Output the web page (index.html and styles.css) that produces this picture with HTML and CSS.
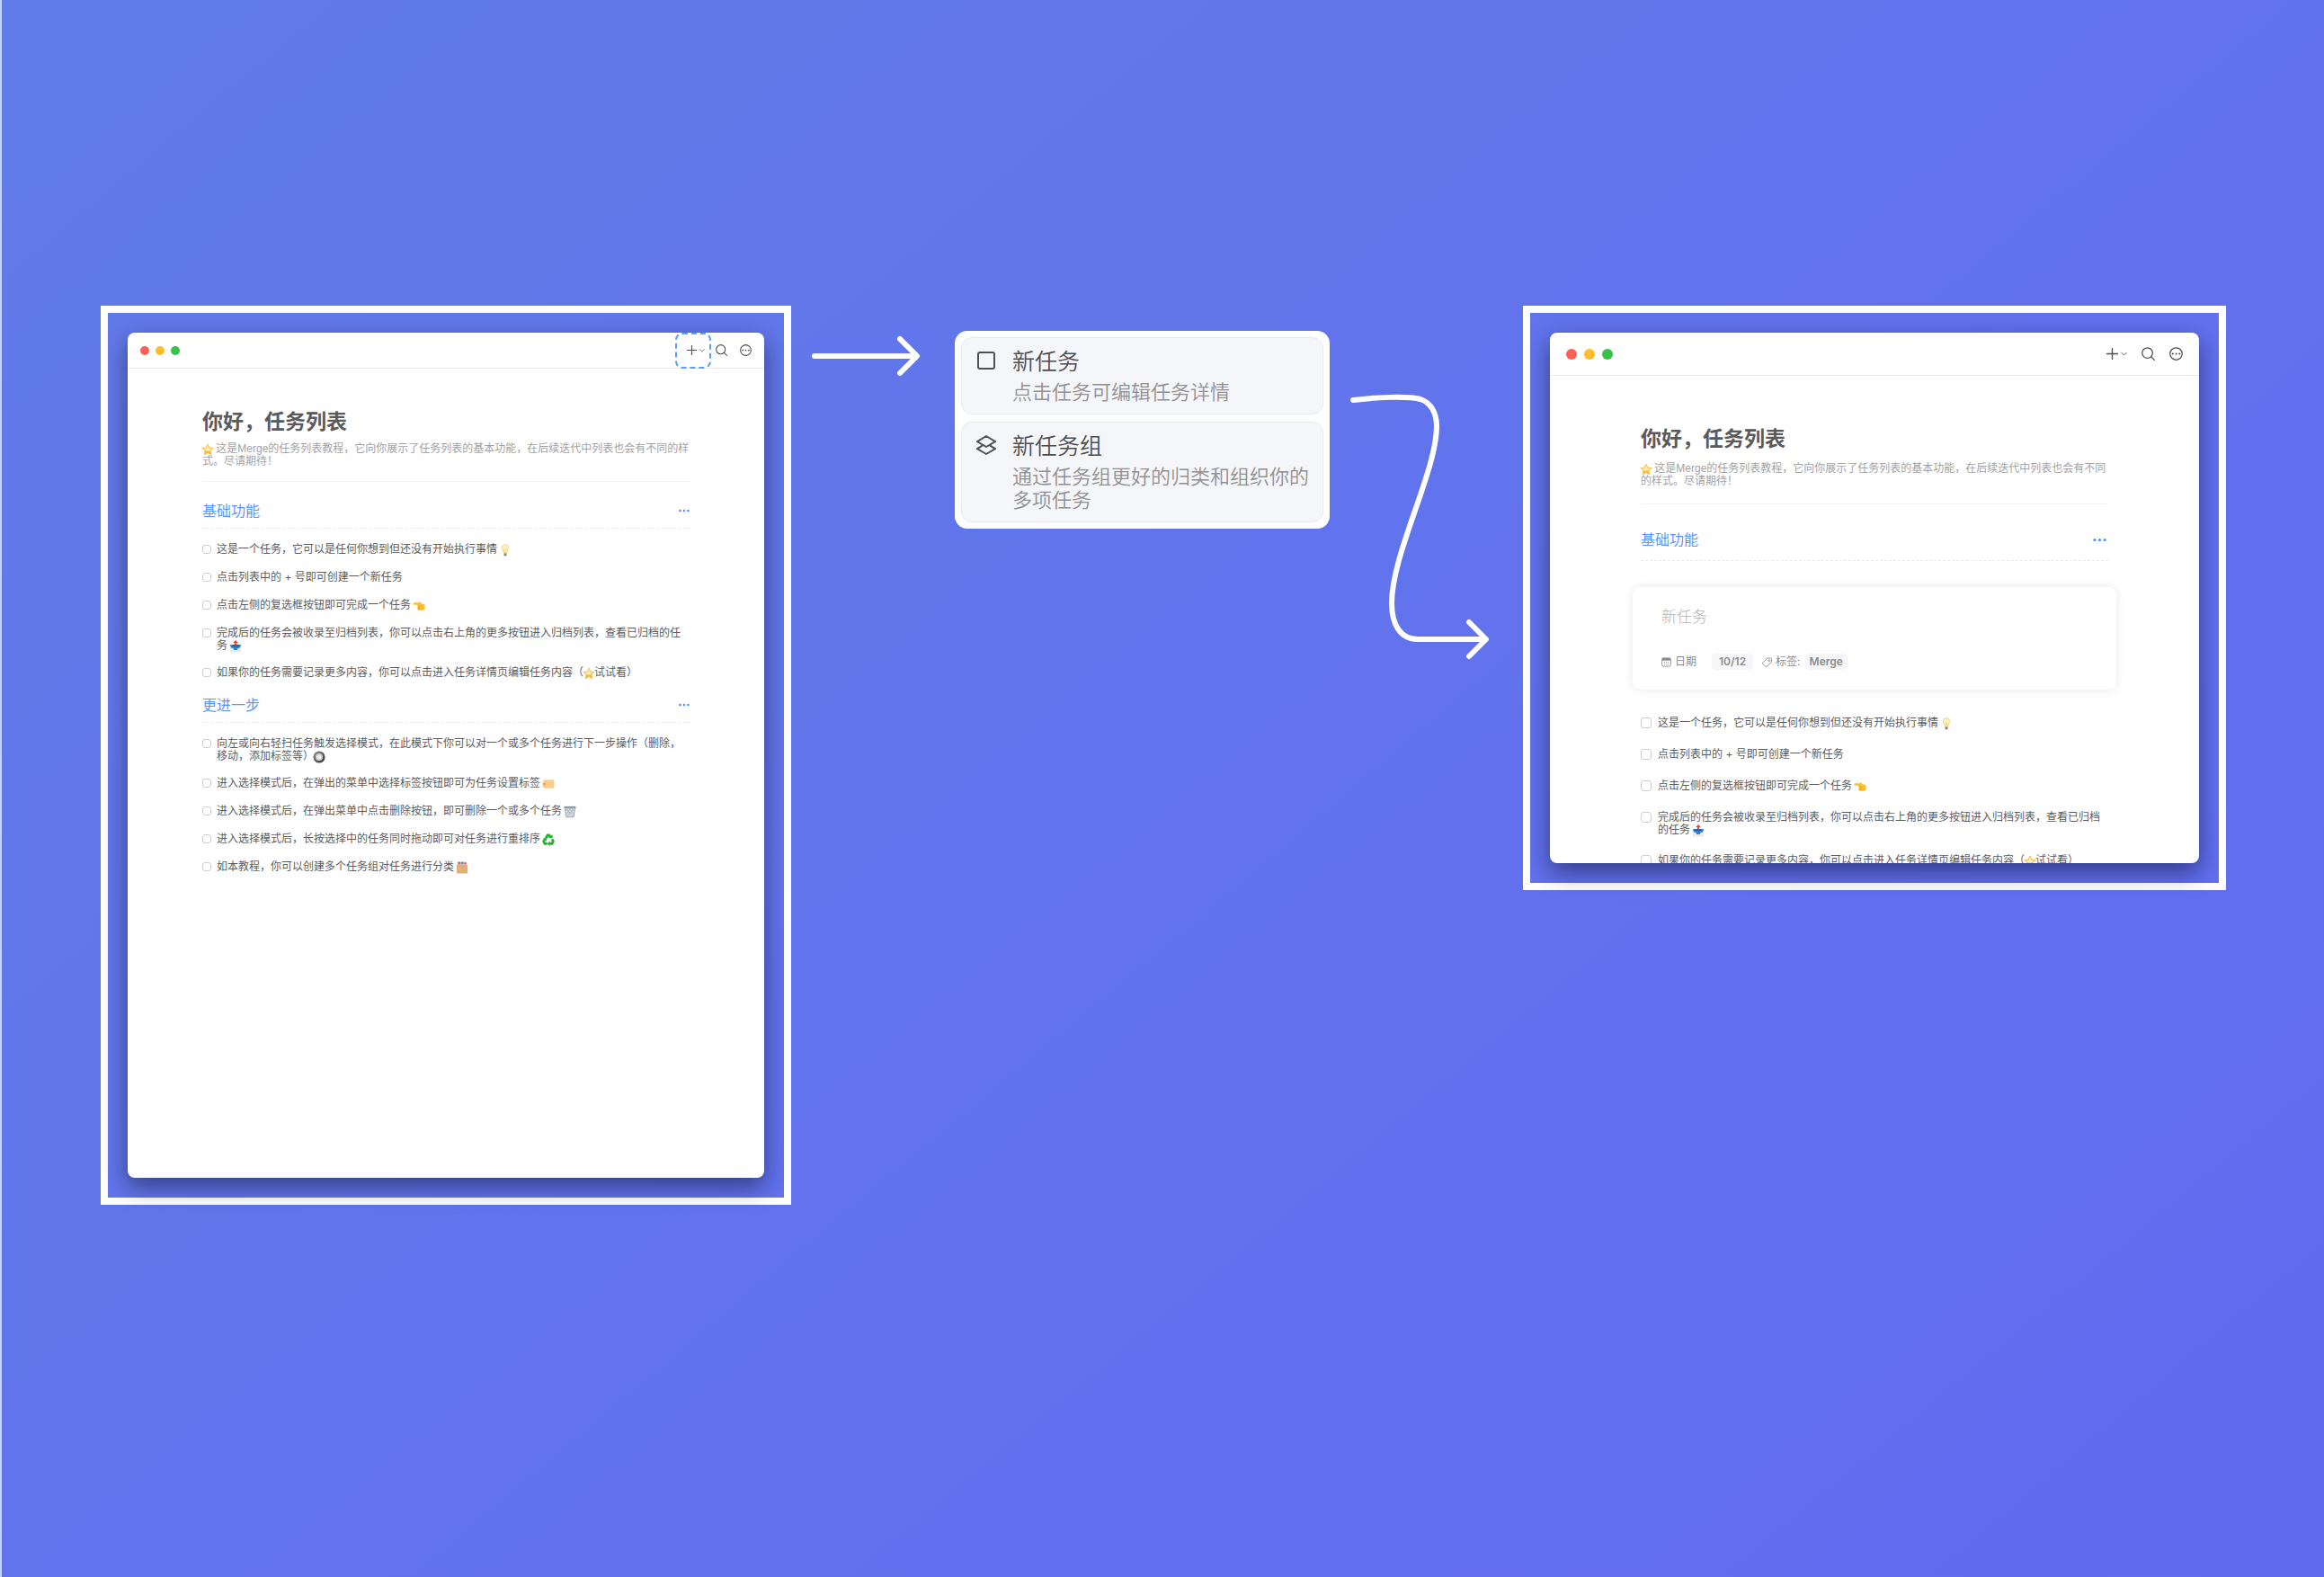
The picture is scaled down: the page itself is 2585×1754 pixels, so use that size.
FILE: index.html
```html
<!DOCTYPE html>
<html lang="zh-CN">
<head>
<meta charset="utf-8">
<meta name="viewport" content="width=device-width, initial-scale=1">
<title>你好，任务列表</title>
<link rel="stylesheet" href="styles.css">
</head>
<body>
<svg class="sprite" aria-hidden="true">
  <defs>
    <linearGradient id="g-star" x1="0" y1="0" x2="0" y2="1"><stop offset="0" stop-color="#ffe98a"/><stop offset="1" stop-color="#f8a91c"/></linearGradient>
    <linearGradient id="g-ring" x1="0" y1="0" x2="1" y2="1"><stop offset="0" stop-color="#8a8a8a"/><stop offset="1" stop-color="#3c3c3c"/></linearGradient>
  </defs>
  <symbol id="star" viewBox="0 0 24 24"><path d="M12 1.500l3.100 7 7.600.8-5.700 5.100 1.700 7.600-6.700-3.900L5.300 22 7 14.400 1.300 9.300l7.600-.8z" fill="url(#g-star)" stroke="#f3b73c" stroke-width="1.200" stroke-linejoin="round"/><path d="M12 5l2 5 5 .6-3.800 3.400-3.200 1-3.200-1L5 10.600l5-.6z" fill="#fff3b8"/></symbol>
  <symbol id="bulb" viewBox="0 0 24 24"><path d="M12 1a6 6.500 0 0 0-6 6.500c0 4 3 6 3.500 10.500h5c.5-4.500 3.500-6.500 3.500-10.500A6 6.500 0 0 0 12 1z" fill="#fff3c4" stroke="#efd27c" stroke-width="1.600"/><path d="M10.500 9v8m3-8v8" stroke="#ecc75e" stroke-width="1.200"/><path d="M9.500 18h5v3.500L13 23h-2l-1.500-1.500z" fill="#8e8672"/></symbol>
  <symbol id="hand" viewBox="0 0 24 24"><path d="M1 7.500C1 6 2 5.500 3 5.500h8.500L14 4c1.200-.6 2.600.8 1.600 2L15 7l4 .5c3 .3 4.500 2.500 4.500 5.500v2c0 3.500-2 5-5.500 5h-5.500c-2.500 0-3.500-1-3.500-3s.4-2.200.8-3S8 12 9 10H3c-1 0-2-1-2-2.500z" fill="#fdbf2d"/><path d="M10.500 13h5m-5.500 3.500h5" stroke="#e08a15" stroke-width="1"/></symbol>
  <symbol id="outbox" viewBox="0 0 24 24"><path d="M1.500 12h21v11.500h-21z" fill="#ececee"/><path d="M1 9h22l-3 6h-3l-2 4H9l-2-4H4z" fill="#2f82cf"/><path d="M4 9h16l-2 3H6z" fill="#1b5c9d"/><path d="M12 0l5 5h-3v4h-4V5H7z" fill="#f0433f"/></symbol>
  <symbol id="radio" viewBox="0 0 24 24"><circle cx="12" cy="12" r="9" fill="#dadada" stroke="url(#g-ring)" stroke-width="4.500"/><circle cx="12" cy="12" r="5" fill="#efefef" stroke="#b5b5b5"/></symbol>
  <symbol id="label" viewBox="0 0 24 24"><path d="M4 4h17a2 2 0 0 1 2 2v12a2 2 0 0 1-2 2H4l-3-4V8z" fill="#fbcb8b"/><circle cx="4" cy="12" r="1.600" fill="#c98b4c"/></symbol>
  <symbol id="bin" viewBox="0 0 24 24"><path d="M2 3h20l-3 19H5z" fill="#d4dade" stroke="#8d979d" stroke-width="1.400"/><path d="M5 6l12 14M10 5l8 10M15 5l4 5M19 6L7 20M14 5L6 15M9 5l-4 5" stroke="#9aa5ab"/><path d="M1 1.500h22v3H1z" fill="#848d92"/></symbol>
  <symbol id="recycle" viewBox="0 0 24 24"><g fill="none" stroke="#1fb52d" stroke-width="5"><path d="M7 9l3.500-5.500h3L16 7"/><path d="M19 11l2 4-2 4.500h-5"/><path d="M10 19.500H5L3 15l2-3"/></g><path d="M12 9h8V2zM15 14v10l-5-4.500zM1 10l7-2 1 7z" fill="#1fb52d"/></symbol>
  <symbol id="filebox" viewBox="0 0 24 24"><path d="M3 1h18v7H3z" fill="#e5e5ea"/><path d="M4 1h5v4H4z" fill="#e45a4f"/><path d="M10 1h5v4h-5z" fill="#4e8fe0"/><path d="M16 2h4v4h-4z" fill="#e45a4f"/><path d="M1.500 7l3-2.500 15 1.500 3 2v15h-21z" fill="#dfb27b"/><path d="M2 9h20" stroke="#d3a068"/></symbol>
  <symbol id="plus" viewBox="0 0 24 24"><path d="M12 1v22M1 12h22"/></symbol>
  <symbol id="chevron" viewBox="0 0 12 8"><path d="M1 1.500l5 5 5-5"/></symbol>
  <symbol id="search" viewBox="0 0 24 24"><circle cx="10.500" cy="10.500" r="9.300"/><path d="M17.500 17.500l5.500 5.500"/></symbol>
  <symbol id="more" viewBox="0 0 24 24"><circle cx="12" cy="12" r="10.800"/><path d="M6 12h.1M12 12h.1M18 12h.1" stroke-width="3.200"/></symbol>
  <symbol id="dots" viewBox="0 0 24 8"><circle cx="3" cy="4" r="2.500"/><circle cx="12" cy="4" r="2.500"/><circle cx="21" cy="4" r="2.500"/></symbol>
</svg>

<main class="board">
  <section class="frame">
    <article class="window">
      <header class="bar">
        <div class="lights"><i class="light red"></i><i class="light amber"></i><i class="light green"></i></div>
        <nav class="tools">
          <button class="tool add" aria-label="新建"><svg class="plus"><use href="#plus"/></svg><svg class="chevron"><use href="#chevron"/></svg></button>
          <button class="tool" aria-label="搜索"><svg class="glyph"><use href="#search"/></svg></button>
          <button class="tool" aria-label="更多"><svg class="glyph"><use href="#more"/></svg></button>
        </nav>
      </header>
      <div class="body">
        <h1 class="title">你好，任务列表</h1>
        <p class="intro"><svg class="emoji" role="img" aria-label="⭐"><use href="#star"/></svg> 这是Merge的任务列表教程，它向你展示了任务列表的基本功能，在后续迭代中列表也会有不同的样式。尽请期待！</p>
        <section class="group">
          <div class="group-head"><h2>基础功能</h2><button class="group-more" aria-label="更多"><svg><use href="#dots"/></svg></button></div>
          <ul class="tasks">
            <li><label class="task"><input type="checkbox"><span>这是一个任务，它可以是任何你想到但还没有开始执行事情 <svg class="emoji" role="img" aria-label="💡"><use href="#bulb"/></svg></span></label></li>
            <li><label class="task"><input type="checkbox"><span>点击列表中的 + 号即可创建一个新任务</span></label></li>
            <li><label class="task"><input type="checkbox"><span>点击左侧的复选框按钮即可完成一个任务 <svg class="emoji" role="img" aria-label="👈"><use href="#hand"/></svg></span></label></li>
            <li><label class="task"><input type="checkbox"><span>完成后的任务会被收录至归档列表，你可以点击右上角的更多按钮进入归档列表，查看已归档的任务 <svg class="emoji" role="img" aria-label="📤"><use href="#outbox"/></svg></span></label></li>
            <li><label class="task"><input type="checkbox"><span>如果你的任务需要记录更多内容，你可以点击进入任务详情页编辑任务内容（<svg class="emoji" role="img" aria-label="⭐"><use href="#star"/></svg>试试看）</span></label></li>
          </ul>
        </section>
        <section class="group">
          <div class="group-head"><h2>更进一步</h2><button class="group-more" aria-label="更多"><svg><use href="#dots"/></svg></button></div>
          <ul class="tasks">
            <li><label class="task"><input type="checkbox"><span>向左或向右轻扫任务触发选择模式，在此模式下你可以对一个或多个任务进行下一步操作（删除，移动，添加标签等）<svg class="emoji" role="img" aria-label="🔘"><use href="#radio"/></svg></span></label></li>
            <li><label class="task"><input type="checkbox"><span>进入选择模式后，在弹出的菜单中选择标签按钮即可为任务设置标签 <svg class="emoji" role="img" aria-label="🏷"><use href="#label"/></svg></span></label></li>
            <li><label class="task"><input type="checkbox"><span>进入选择模式后，在弹出菜单中点击删除按钮，即可删除一个或多个任务 <svg class="emoji" role="img" aria-label="🗑"><use href="#bin"/></svg></span></label></li>
            <li><label class="task"><input type="checkbox"><span>进入选择模式后，长按选择中的任务同时拖动即可对任务进行重排序 <svg class="emoji" role="img" aria-label="♻"><use href="#recycle"/></svg></span></label></li>
            <li><label class="task"><input type="checkbox"><span>如本教程，你可以创建多个任务组对任务进行分类 <svg class="emoji" role="img" aria-label="🗂"><use href="#filebox"/></svg></span></label></li>
          </ul>
        </section>
      </div>
    </article>
  </section>

  <svg class="arrow" viewBox="0 0 182 430" aria-hidden="true"><path d="M26 56H139M121 37l19 19-19 19"/></svg>

  <section class="menu">
    <button class="menu-item">
      <svg class="menu-icon" viewBox="0 0 22 22"><rect x="2" y="2" width="18" height="18" rx="2"/></svg>
      <span class="menu-text"><span class="menu-title">新任务</span><span class="menu-desc">点击任务可编辑任务详情</span></span>
    </button>
    <button class="menu-item">
      <svg class="menu-icon" viewBox="0 0 22 22"><path d="M11 1L21 7.200 11 13 1 7.200zM7 11.300L1 15.200 11 21l10-5.800-6-3.900"/></svg>
      <span class="menu-text"><span class="menu-title">新任务组</span><span class="menu-desc">通过任务组更好的归类和组织你的多项任务</span></span>
    </button>
  </section>

  <svg class="arrow" viewBox="0 0 215 430" aria-hidden="true"><path d="M26 105C50 102 86 100 101 104C113 108 119 120 119 134C119 184 69 276 69 331C69 355 79 371 98 371H173M155 352l19 19-19 19"/></svg>

  <section class="frame">
    <article class="window compact">
      <header class="bar">
        <div class="lights"><i class="light red"></i><i class="light amber"></i><i class="light green"></i></div>
        <nav class="tools">
          <button class="tool add" aria-label="新建"><svg class="plus"><use href="#plus"/></svg><svg class="chevron"><use href="#chevron"/></svg></button>
          <button class="tool" aria-label="搜索"><svg class="glyph"><use href="#search"/></svg></button>
          <button class="tool" aria-label="更多"><svg class="glyph"><use href="#more"/></svg></button>
        </nav>
      </header>
      <div class="body">
        <h1 class="title">你好，任务列表</h1>
        <p class="intro"><svg class="emoji" role="img" aria-label="⭐"><use href="#star"/></svg> 这是Merge的任务列表教程，它向你展示了任务列表的基本功能，在后续迭代中列表也会有不同的样式。尽请期待！</p>
        <section class="group">
          <div class="group-head"><h2>基础功能</h2><button class="group-more" aria-label="更多"><svg><use href="#dots"/></svg></button></div>
          <form class="draft">
            <input class="draft-name" type="text" placeholder="新任务" aria-label="新任务">
            <div class="draft-meta">
              <span class="field"><svg viewBox="0 0 24 24"><rect x="1.500" y="2" width="21" height="20" rx="3"/><path d="M2 5h20" stroke-width="6"/><path d="M6.500 12h2m2.500 0h2m2.500 0h2m-11 5h2m2.500 0h2m2.500 0h2"/></svg>日期</span>
              <button type="button" class="chip date">10/12</button>
              <span class="field"><svg viewBox="0 0 24 24"><path d="M13 2h8l2 2v8L11 22.500H8L1.500 16v-3z" stroke-linejoin="round"/><circle cx="17" cy="8" r="2"/></svg>标签:</span>
              <button type="button" class="chip">Merge</button>
            </div>
          </form>
          <ul class="tasks">
            <li><label class="task"><input type="checkbox"><span>这是一个任务，它可以是任何你想到但还没有开始执行事情 <svg class="emoji" role="img" aria-label="💡"><use href="#bulb"/></svg></span></label></li>
            <li><label class="task"><input type="checkbox"><span>点击列表中的 + 号即可创建一个新任务</span></label></li>
            <li><label class="task"><input type="checkbox"><span>点击左侧的复选框按钮即可完成一个任务 <svg class="emoji" role="img" aria-label="👈"><use href="#hand"/></svg></span></label></li>
            <li><label class="task"><input type="checkbox"><span>完成后的任务会被收录至归档列表，你可以点击右上角的更多按钮进入归档列表，查看已归档的任务 <svg class="emoji" role="img" aria-label="📤"><use href="#outbox"/></svg></span></label></li>
            <li><label class="task"><input type="checkbox"><span>如果你的任务需要记录更多内容，你可以点击进入任务详情页编辑任务内容（<svg class="emoji" role="img" aria-label="⭐"><use href="#star"/></svg>试试看）</span></label></li>
          </ul>
        </section>
      </div>
    </article>
  </section>
</main>
</body>
</html>
```

FILE: styles.css
```css
* { box-sizing: border-box; }

body {
  margin: 0;
  font-family: Inter, "Noto Sans CJK SC", sans-serif;
  font-size: 12px;
  line-height: 14px;
  color: #5c5c5e;
  text-spacing-trim: space-all;
}

h1, h2, p, ul { margin: 0; padding: 0; }
ul { list-style: none; }

button, input {
  font: inherit;
  color: inherit;
  margin: 0;
  padding: 0;
  border: 0;
  background: none;
}

.sprite { position: absolute; width: 0; height: 0; }

.board {
  display: grid;
  grid-template-columns: 768fr 182px 417fr 215px 782fr;
  align-items: start;
  min-height: 100vh;
  padding: 340px 109px 40px 110px;
  border-left: 2px solid #c8d5fb;
  background: linear-gradient(140deg, #617ce8, #626af1);
}

.frame {
  padding: 22px;
  border: 8px solid #fff;
}

.window {
  min-height: 940px;
  border-radius: 8px;
  background: #fff;
  box-shadow: 0 10px 26px rgba(10, 10, 30, 0.5);
}

/* title bar */
.bar {
  display: flex;
  align-items: center;
  justify-content: space-between;
  height: 40px;
  padding: 0 14px;
  border-bottom: 1px solid #e9e9eb;
}

.lights { display: flex; gap: 7px; }
.light { width: 10px; height: 10px; border-radius: 50%; }
.red { background: #ff5f57; }
.amber { background: #febc2e; }
.green { background: #38c149; }

.tools { display: flex; align-items: center; gap: 14px; }
.tool { display: flex; align-items: center; }
.tool svg {
  fill: none;
  stroke: #4e4e50;
  stroke-width: 2;
  stroke-linecap: round;
}
.add {
  justify-content: center;
  gap: 3px;
  width: 40px;
  height: 40px;
  margin-right: -9px;
  padding-left: 6px;
  border: 2px dashed #5a9cf8;
  border-radius: 8px;
}
.tool .plus { width: 11px; height: 11px; stroke-width: 2.5px; }
.tool .chevron { width: 6px; height: 4px; stroke-width: 1.5px; }
.glyph { width: 13px; height: 13px; }

/* list page */
.body { padding: 43px 82px 0 83px; }

.title {
  font-size: 23px;
  font-weight: 600;
  line-height: 32px;
  color: #5a5a5c;
}

.intro {
  margin-top: 7px;
  padding-bottom: 15px;
  border-bottom: 1px solid #f2f3f4;
  font-family: "Liberation Sans", "Noto Sans CJK SC", sans-serif;
  color: #a2a2a3;
}

.emoji {
  width: 14px;
  height: 14px;
  margin: -2px -1px;
  vertical-align: -2px;
}

.group { margin-top: 17px; }
.intro + .group { margin-top: 21px; }

.group-head {
  display: flex;
  align-items: center;
  justify-content: space-between;
  padding-bottom: 8px;
  border-bottom: 1px dashed #dfeafb;
}
.group-head h2 {
  font-size: 16px;
  font-weight: 400;
  line-height: 22px;
  color: #5598fa;
}
.group-more { display: flex; padding-right: 1px; }
.group-more svg { width: 12px; height: 4px; fill: #4b92f7; }

.tasks {
  display: grid;
  gap: 16px;
  padding-top: 16px;
}
.task {
  display: flex;
  gap: 6px;
  min-height: 15px;
}
.task input {
  flex: none;
  appearance: none;
  width: 10px;
  height: 10px;
  margin-top: 2px;
  border: 1px solid #cdcdda;
  border-radius: 3px;
}

/* shorter window with the task being drafted */
.compact {
  height: 590px;
  min-height: 0;
  overflow: hidden;
}
.compact .bar { height: 48px; padding: 0 18px; }
.compact .lights { gap: 8px; }
.compact .light { width: 12px; height: 12px; }
.compact .tools { gap: 16px; }
.compact .add { width: auto; margin: 0; padding: 0; border: 0; }
.compact .plus { width: 13px; height: 13px; }
.compact .chevron { width: 7px; height: 5px; }
.compact .glyph { width: 15px; height: 15px; }
.compact .body { padding: 54px 101px 0; }
.compact .intro { margin-top: 10px; padding-bottom: 18px; }
.compact .group { margin-top: 28px; }
.compact .group-head { padding-bottom: 12px; }
.compact .group-more { padding-right: 2px; }
.compact .group-more svg { width: 15px; height: 5px; }
.compact .tasks { gap: 20px; padding-top: 30px; }
.compact .task { gap: 7px; }
.compact .task input { width: 12px; height: 12px; margin-top: 1px; }

.draft {
  margin: 29px -9px 0;
  padding: 21px 32px 22px;
  border-radius: 9px;
  box-shadow: 0 0 12px rgba(0, 0, 0, 0.09);
}
.draft-name {
  display: block;
  width: 100%;
  height: 24px;
  font-size: 17px;
  font-weight: 300;
}
.draft-name::placeholder { color: #b4b2b2; opacity: 1; }

.draft-meta {
  display: flex;
  align-items: center;
  margin-top: 29px;
  color: #8b8b8d;
}
.field { display: flex; align-items: center; gap: 4px; }
.field svg {
  width: 11px;
  height: 11px;
  fill: none;
  stroke: #8b8b8d;
  stroke-width: 2;
}
.chip {
  height: 18px;
  margin-left: 5px;
  padding: 0 5px;
  border-radius: 4px;
  background: #f6f6f9;
  font-weight: 600;
}
.date { margin: 0 10px 0 17px; padding: 0 8px; }

/* connectors */
.arrow {
  width: 100%;
  fill: none;
  stroke: #fff;
  stroke-width: 6;
  stroke-linecap: round;
  stroke-linejoin: round;
}

/* pop-up menu */
.menu {
  display: grid;
  gap: 8px;
  margin-top: 28px;
  padding: 7px;
  border-radius: 14px;
  background: #fff;
}
.menu-item {
  display: flex;
  align-items: flex-start;
  gap: 18px;
  padding: 10px 8px 11px 16px;
  border: 1px solid #e6eaf3;
  border-radius: 12px;
  background: #f4f6fa;
  text-align: left;
}
.menu-icon {
  flex: none;
  width: 22px;
  height: 22px;
  margin-top: 4px;
  fill: none;
  stroke: #505052;
  stroke-width: 2;
  stroke-linejoin: round;
}
.menu-text { display: grid; gap: 5px; }
.menu-title { font-size: 25px; line-height: 32px; font-weight: 350; color: #4c4c4e; }
.menu-desc { font-size: 22px; line-height: 26px; font-weight: 350; color: #909092; }
```
